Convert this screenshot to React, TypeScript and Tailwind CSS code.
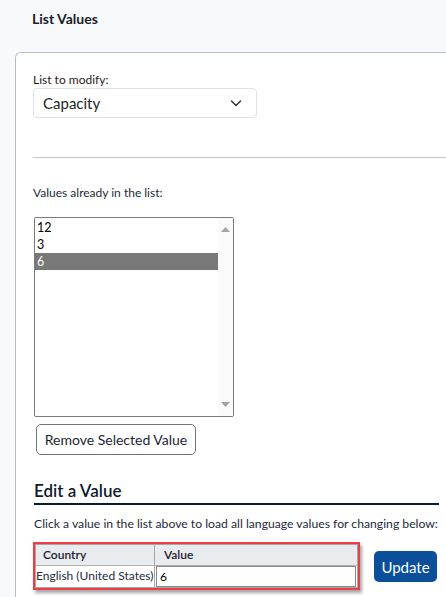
import React from "react";

const font = { fontFamily: 'Lato, "Noto Sans", sans-serif' };

function Chevron() {
  return (
    <svg width="14" height="14" viewBox="0 0 14 14" fill="none">
      <path d="M2.5 5 L7 9.5 L11.5 5" stroke="#343a40" strokeWidth="1.6" strokeLinecap="round" strokeLinejoin="round" />
    </svg>
  );
}

export default function App() {
  const items = ["12", "3", "6"];
  return (
    <div className="w-[446px] h-[597px] overflow-hidden bg-[#f8f9fa] text-[#212529]" style={font}>
      <div className="h-[52px] pl-[32px] pt-[10px] text-[14px] font-bold leading-[18px] text-[#1b1b2f]">List Values</div>
      <div className="ml-[15px] w-[470px] h-[560px] border-l border-t border-[#b9bec4] rounded-tl-[6px] bg-white pl-[17px] pt-[19px]">
        <div className="text-[12px] leading-[16px] text-[#2b1a1a]">List to modify:</div>
        <div className="w-[224px] h-[30px] border border-[#dee2e6] rounded-[4px] flex items-center justify-between pl-[9px] pr-[13px] text-[15px]">
          <span>Capacity</span>
          <Chevron />
        </div>
        <div className="mt-[39px] h-px bg-[#c4c4c4]" />
        <div className="mt-[27px] text-[12px] leading-[16px] text-[#1e2a3a]">Values already in the list:</div>
        <div className="mt-[16px] ml-[1px] w-[200px] h-[200px] border border-[#7a7a7a] rounded-[2px] flex bg-white">
          <div className="flex-1 pt-[1px] text-[12.5px] leading-[17px] text-black">
            {items.map((it) => (
              <div key={it} className={it === "6" ? "bg-[#787878] text-white pl-[2px] h-[17px]" : "pl-[2px] h-[17px]"}>
                {it}
              </div>
            ))}
          </div>
          <div className="w-[15px] bg-[#fafafa] flex flex-col items-center justify-between pt-[9px] pb-[9px]">
            <svg width="9" height="5" viewBox="0 0 9 5"><path d="M0 5 L4.5 0 L9 5 Z" fill="#a3a3a3" /></svg>
            <svg width="9" height="5" viewBox="0 0 9 5"><path d="M0 0 L4.5 5 L9 0 Z" fill="#a3a3a3" /></svg>
          </div>
        </div>
        <button className="block mt-[7px] ml-[3px] w-[160px] h-[31px] border border-[#6c757d] rounded-[5px] text-[14px] leading-[20px] whitespace-nowrap text-[#1a1f36] bg-white">
          Remove Selected Value
        </button>
        <div className="mt-[24px] ml-[1px] w-[405px] h-[26px] border-b-2 border-[#0b1a33] text-[17px] leading-[24px] font-semibold text-[#0d1b30]">
          Edit a Value
        </div>
        <div className="mt-[11px] ml-[1px] text-[12.2px] leading-[16px] whitespace-nowrap text-[#1e2a3a]">
          Click a value in the list above to load all language values for changing below:
        </div>
        <div className="mt-[10px] flex items-start">
          <div className="w-[327px] border-2 border-[#ee3d45] shadow-[2px_3px_3px_rgba(0,0,0,0.35)]">
            <div className="border border-[#a6a6a6] text-[12px]">
              <div className="flex h-[21px] bg-[#e9ecef] border-b border-[#b0b0b0] font-semibold leading-[20px] text-[#1b1b2f]">
                <div className="w-[119px] border-r border-[#a6a6a6] pl-[7px]">Country</div>
                <div className="flex-1 pl-[9px]">Value</div>
              </div>
              <div className="flex h-[21px] leading-[20px] text-[#1e2a3a]">
                <div className="w-[119px] border-r border-[#a6a6a6] whitespace-nowrap overflow-hidden">English (United States)</div>
                <div className="flex-1 pl-[1px] pr-[1px]">
                  <div className="h-[21px] border border-[#8a8a8a] pl-[3px] leading-[19px] text-black">6</div>
                </div>
              </div>
            </div>
          </div>
          <button className="block ml-[14px] mt-[9px] w-[63px] h-[31px] rounded-[5px] bg-[#0b4f9a] text-white text-[15px] leading-[20px]">
            Update
          </button>
        </div>
      </div>
    </div>
  );
}
